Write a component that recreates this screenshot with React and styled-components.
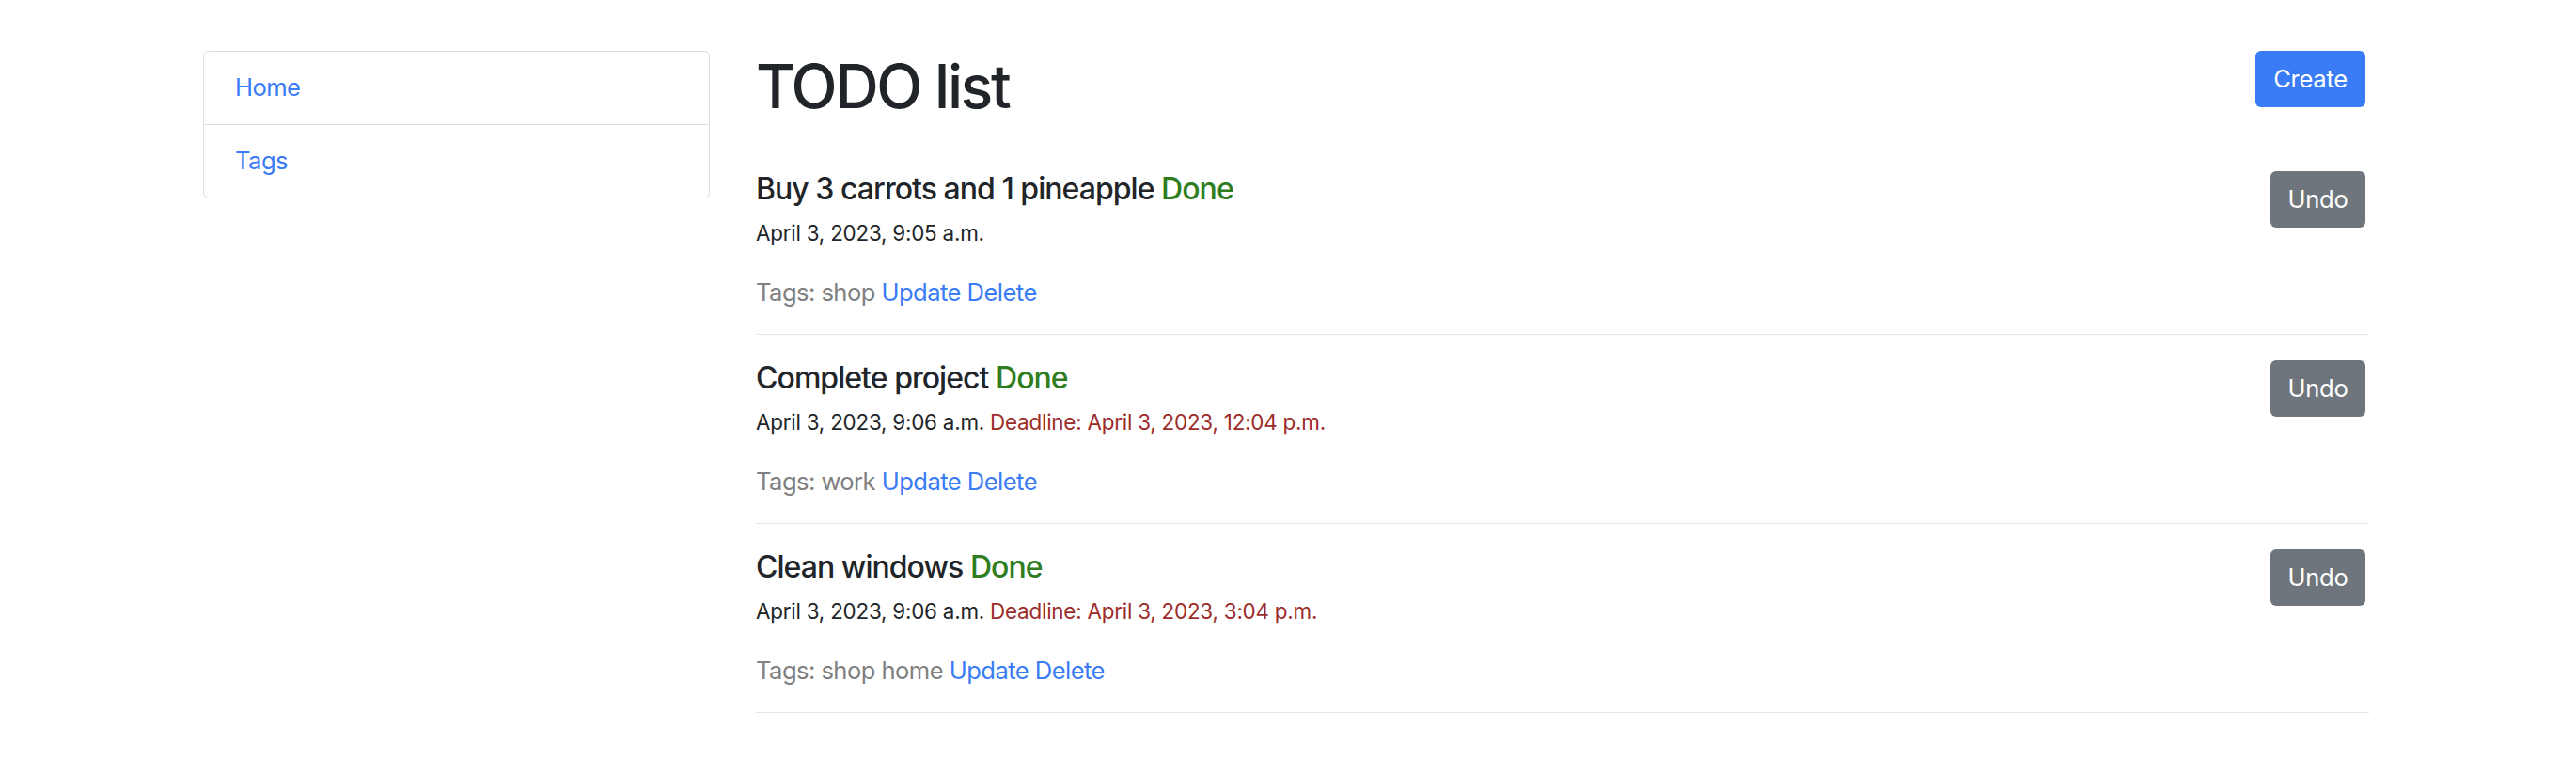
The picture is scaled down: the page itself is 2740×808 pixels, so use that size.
import React from "react";
import styled, { createGlobalStyle } from "styled-components";

const GlobalStyle = createGlobalStyle`
  * { box-sizing: border-box; }
  html, body { margin: 0; padding: 0; background: #ffffff; }
  body {
    font-family: Inter, "Liberation Sans", Arial, sans-serif;
    font-size: 25.6px;
    line-height: 1.5;
    color: #212529;
    letter-spacing: -0.022em;
  }
`;

const Page = styled.div`
  display: grid;
  grid-template-columns: 539px 1fr;
  column-gap: 49px;
  align-items: start;
  padding: 54px 220px 0 216px;
`;

const Sidebar = styled.nav`
  display: flex;
  flex-direction: column;
  border: 1px solid #dfdfdf;
  border-radius: 6px;
  overflow: hidden;
`;

const NavItem = styled.a`
  display: block;
  padding: 19.2px 33px;
  line-height: 38.4px;
  color: #3a7bf6;
  text-decoration: none;
  & + & {
    border-top: 1px solid #dfdfdf;
  }
`;

const Main = styled.main`
  display: flex;
  flex-direction: column;
`;

const Header = styled.header`
  display: flex;
  justify-content: space-between;
  align-items: flex-start;
  padding-right: 4px;
  margin-bottom: 24.2px;
`;

const Heading = styled.h1`
  margin: 0;
  font-size: 64px;
  line-height: 76.8px;
  font-weight: 500;
  letter-spacing: -0.035em;
  color: #212529;
`;

const Button = styled.button`
  font-family: inherit;
  font-size: 25.6px;
  line-height: 38.4px;
  letter-spacing: -0.012em;
  font-weight: 400;
  color: #ffffff;
  background: ${(p) => (p.$variant === "primary" ? "#3a7bf6" : "#6e757c")};
  border: none;
  border-radius: 6px;
  padding: 10.8px 0;
  width: ${(p) => (p.$variant === "primary" ? "117px" : "101px")};
  text-align: center;
  cursor: pointer;
  flex-shrink: 0;
`;

const TodoList = styled.div`
  display: flex;
  flex-direction: column;
`;

const TodoItem = styled.article`
  display: flex;
  justify-content: space-between;
  align-items: flex-start;
  padding: 27px 4px 24.6px 0;
  border-bottom: 1px solid #e4e5e6;
`;

const TodoBody = styled.div`
  display: flex;
  flex-direction: column;
`;

const TodoTitle = styled.h5`
  margin: 0 0 11px;
  font-size: 32px;
  line-height: 38.4px;
  font-weight: 500;
  letter-spacing: -0.03em;
  color: #212529;
`;

const Status = styled.span`
  color: #2e7d1f;
`;

const Meta = styled.p`
  margin: 0 0 27px;
  font-size: 22.4px;
  line-height: 33.6px;
  letter-spacing: -0.01em;
  color: #212529;
`;

const Deadline = styled.span`
  color: #9c2c2a;
`;

const Tags = styled.p`
  margin: 0;
  line-height: 38.4px;
  color: #808080;
`;

const ActionLink = styled.a`
  color: #3a7bf6;
  text-decoration: none;
`;

const todos = [
  {
    id: 1,
    title: "Buy 3 carrots and 1 pineapple",
    created: "April 3, 2023, 9:05 a.m.",
    deadline: null,
    tags: "shop",
  },
  {
    id: 2,
    title: "Complete project",
    created: "April 3, 2023, 9:06 a.m.",
    deadline: "April 3, 2023, 12:04 p.m.",
    tags: "work",
  },
  {
    id: 3,
    title: "Clean windows",
    created: "April 3, 2023, 9:06 a.m.",
    deadline: "April 3, 2023, 3:04 p.m.",
    tags: "shop home",
  },
];

export default function App() {
  return (
    <>
      <GlobalStyle />
      <Page>
        <Sidebar>
          <NavItem href="#">Home</NavItem>
          <NavItem href="#">Tags</NavItem>
        </Sidebar>
        <Main>
          <Header>
            <Heading>TODO list</Heading>
            <Button $variant="primary">Create</Button>
          </Header>
          <TodoList>
            {todos.map((t) => (
              <TodoItem key={t.id}>
                <TodoBody>
                  <TodoTitle>
                    {t.title} <Status>Done</Status>
                  </TodoTitle>
                  <Meta>
                    {t.created}
                    {t.deadline && (
                      <>
                        {" "}
                        <Deadline>Deadline: {t.deadline}</Deadline>
                      </>
                    )}
                  </Meta>
                  <Tags>
                    Tags: {t.tags} <ActionLink href="#">Update</ActionLink>{" "}
                    <ActionLink href="#">Delete</ActionLink>
                  </Tags>
                </TodoBody>
                <Button $variant="secondary">Undo</Button>
              </TodoItem>
            ))}
          </TodoList>
        </Main>
      </Page>
    </>
  );
}
